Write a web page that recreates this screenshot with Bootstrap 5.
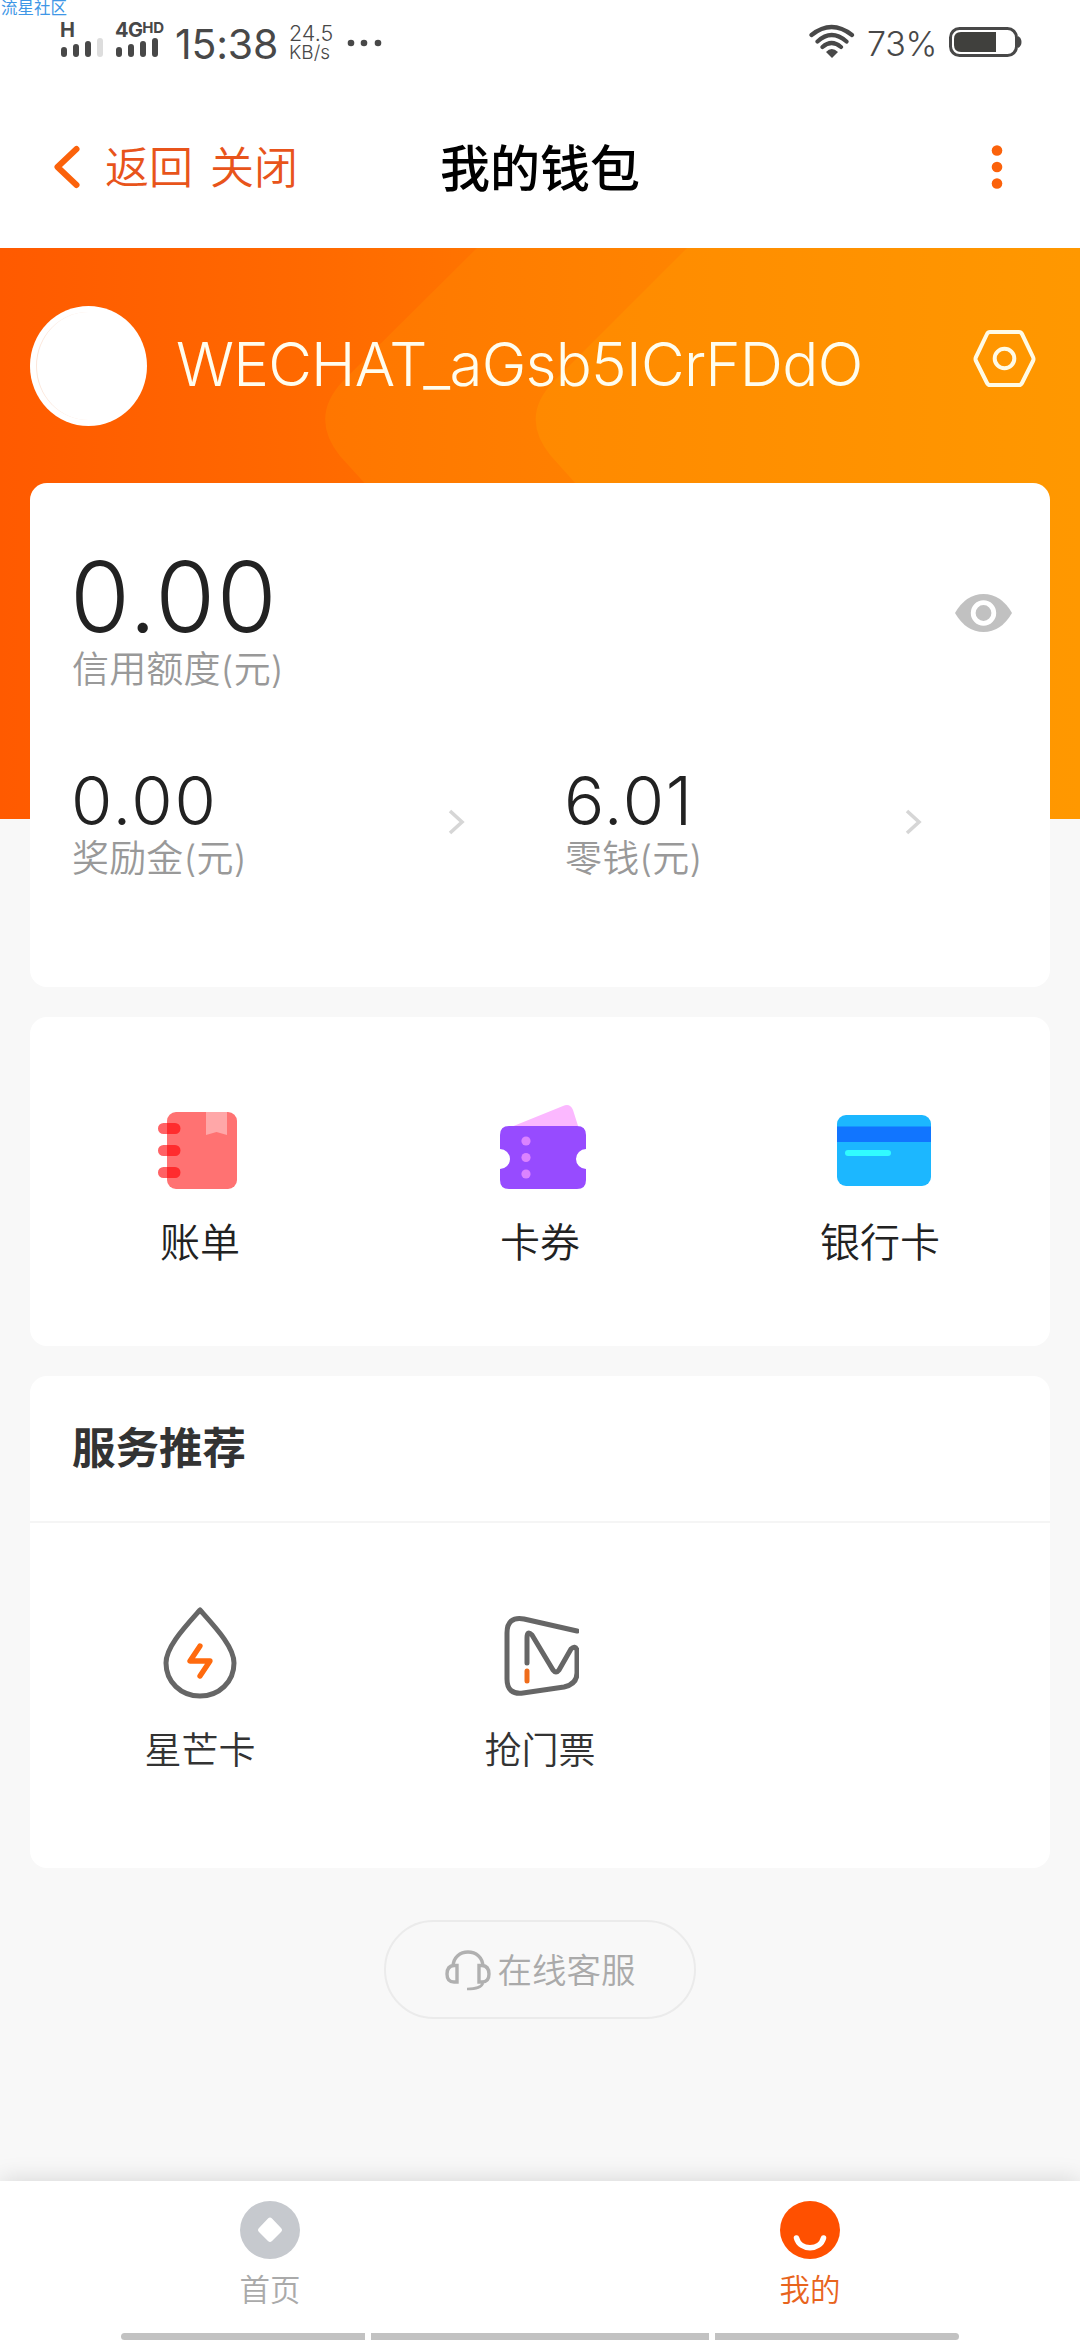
<!DOCTYPE html>
<html lang="zh-CN">
<head>
<meta charset="utf-8">
<meta name="viewport" content="width=device-width, initial-scale=1">
<title>我的钱包</title>
<link rel="stylesheet" href="https://cdn.jsdelivr.net/npm/bootstrap@5.3.0/dist/css/bootstrap.min.css">
<style>
body{width:1080px;height:2340px;overflow:hidden;background:#f8f8f8;color:#222;font-family:Inter,"Noto Sans CJK SC",sans-serif;font-weight:350;line-height:1}
svg{display:block;flex:none}
.watermark{left:1px;top:-1px;font-size:16.5px;color:#3f97e6;line-height:18px;z-index:5;font-weight:400}
.statusbar{height:84px;color:#484848;padding:0 58px 0 60px}
.sig{padding-top:22px}
.sig-label{font-size:20px;line-height:16px;font-weight:700;letter-spacing:-.6px}
.sig-label sup{font-size:15px;top:-4px;line-height:0;vertical-align:baseline;letter-spacing:-.3px}
.clock{font-size:41px;font-weight:400;letter-spacing:-.2px;padding-top:24px;width:114px}
.netspeed{font-size:21.5px;line-height:20px;font-weight:350;padding-top:23px;width:57px}
.netspeed div+div{font-size:19px}
.battery-pct{font-size:34px;font-weight:350;letter-spacing:-.3px;padding-top:27px;width:82px}
.titlebar{height:164px;padding:2px 75px 0 51px}
.orange-link{color:#e8541b;font-size:44px;line-height:60px}
.page-title{font-size:50px;font-weight:500;color:#000;line-height:60px;top:55px}
.hero{height:571px}
.hero-bg{z-index:0}
.hero-user{height:235px;padding:0 44px 0 30px;z-index:1}
.avatar{width:117px;height:120px;background:#fff;border-radius:50%}
.avatar i{width:105px;height:108px;border-radius:50%;border-left:1px solid #fbe6da}
.nickname{font-size:60px;font-weight:300;color:#fffdee;line-height:70px;letter-spacing:-.75px;margin:-3px 0 0 29px}
.panel{background:#fff;border-radius:17px;margin:0 30px;position:relative;z-index:1}
.wallet{height:504px;padding:77px 37px 0 42px;margin-top:-336px}
.amount-lg{font-size:97px;line-height:73px;font-weight:300;letter-spacing:1.5px;margin-left:-2px}
.amount-sm{font-size:67px;line-height:50px;font-weight:300;letter-spacing:1.7px;margin-left:-1px}
.caption{font-size:37px;line-height:44px;color:#999;letter-spacing:.15px}
.entries{height:329px;margin-top:30px;padding-top:83px}
.entry{width:340px}
.entry span{font-size:40px;line-height:48px}
.service{height:492px;margin-top:30px}
.service h2{font-size:43.5px;font-weight:700;color:#333;height:147px;padding:0 42px;line-height:145px;border-bottom:2px solid #f5f5f5;margin:0}
.service .entry span{font-size:37px;line-height:44px;color:#333}
.help-btn{width:312px;height:99px;margin:52px auto 0;border:2px solid #ebebeb;border-radius:50px;color:#aaa;font-size:34.5px;font-weight:350;padding:2px 0 0}
.tabs{height:159px;background:#fff;margin-top:162px;box-shadow:0 -2px 22px rgba(0,0,0,.13);position:relative}
.tab-item{font-size:30.5px;line-height:36px;color:#aaa;padding-top:20px}
.tab-item.active{color:#e8641c}
.gesture{height:7px;gap:6px;left:121px;bottom:0}
.gesture i{background:#c2c2c2;height:7px}
</style>
</head>
<body class="position-relative">
<div class="watermark position-absolute">流星社区</div>
<header class="bg-white">
 <div class="statusbar d-flex align-items-start justify-content-between">
  <div class="d-flex">
   <div class="sig" style="width:55px"><div class="sig-label">H</div>
    <svg width="44" height="20"><g stroke="#484848" stroke-width="6" stroke-linecap="round"><path d="M4 12V16M16 9V16M28 6V16"/><path stroke="#ddd" d="M40 3V16"/></g></svg></div>
   <div class="sig" style="width:60px"><div class="sig-label text-nowrap">4G<sup>HD</sup></div>
    <svg width="46" height="20"><path d="M4 12V16M16 9V16M28 6V16M40 3V16" stroke="#484848" stroke-width="6" stroke-linecap="round"/></svg></div>
   <div class="clock">15:38</div>
   <div class="netspeed"><div>24.5</div><div>KB/s</div></div>
   <svg width="40" height="86"><g fill="#484848"><circle cx="5" cy="43" r="3.300"/><circle cx="18" cy="43" r="3.300"/><circle cx="32" cy="43" r="3.300"/></g></svg>
  </div>
  <div class="d-flex align-items-start">
   <svg width="46" height="60" style="margin-right:12px"><g fill="none" stroke="#484848" stroke-width="4.200" stroke-linecap="round"><path d="M2.500 35Q22.500 19 43 35M8.500 41.500Q22.500 28.500 37.500 41.500M13.500 47Q22.500 39 32 47"/></g><path d="M17 52Q22.500 46 29 52L23 58Z" fill="#484848"/></svg>
   <div class="battery-pct">73%</div>
   <svg width="73" height="60"><rect x="1.500" y="28.500" width="66" height="27" rx="9" fill="none" stroke="#484848" stroke-width="3"/><path d="M12 32H47V52H12Q5 52 5 45V39Q5 32 12 32Z" fill="#40403d"/><path d="M69 36Q72.500 38 72.500 42T69 48Z" fill="#484848"/></svg>
  </div>
 </div>
 <nav class="titlebar d-flex align-items-center justify-content-between position-relative">
  <div class="d-flex align-items-center orange-link">
   <svg width="30" height="46"><path d="M25.500 5L6.500 23L25.500 41" fill="none" stroke="#fb620b" stroke-width="6" stroke-linecap="round" stroke-linejoin="round"/></svg>
   <span style="margin:2px 0 0 24px">返回</span><span style="margin:2px 0 0 17px">关闭</span>
  </div>
  <div class="page-title position-absolute start-50 translate-middle-x">我的钱包</div>
  <svg width="16" height="46"><g fill="#fb620b"><circle cx="8" cy="6.500" r="5.300"/><circle cx="8" cy="23" r="5.300"/><circle cx="8" cy="39.500" r="5.300"/></g></svg>
 </nav>
</header>
<main>
 <section class="hero position-relative">
  <svg class="hero-bg position-absolute top-0 start-0" width="1080" height="571">
   <defs><linearGradient id="heroGrad"><stop offset="0" stop-color="#ff5a00"/><stop offset=".3" stop-color="#ff6a00"/><stop offset=".45" stop-color="#ff7400"/><stop offset="1" stop-color="#ff9800"/></linearGradient>
   <linearGradient id="bandA" gradientUnits="userSpaceOnUse" x1="325" x2="700" y1="0" y2="0"><stop offset="0" stop-color="#ff7600"/><stop offset="1" stop-color="#ff8500"/></linearGradient>
   <linearGradient id="bandB" gradientUnits="userSpaceOnUse" x1="535" x2="1080" y1="0" y2="0"><stop offset="0" stop-color="#ff8900"/><stop offset="1" stop-color="#ff9800"/></linearGradient></defs>
   <rect width="1080" height="571" fill="url(#heroGrad)"/>
   <path d="M477 0L343 133Q309 169 340 208L410 285V571H1080V0Z" fill="url(#bandA)"/>
   <path d="M687 0L554 133Q519 169 551 208L620 285V571H1080V0Z" fill="url(#bandB)"/>
  </svg>
  <div class="hero-user d-flex align-items-center position-relative">
   <div class="avatar d-flex align-items-center justify-content-center"><i></i></div>
   <div class="nickname text-nowrap flex-grow-1">WECHAT_aGsb5ICrFDdO</div>
   <svg width="63" height="60" style="margin-top:-15px"><g fill="none" stroke="#fffbe6" stroke-width="4" stroke-linejoin="round"><path d="M17 4H46Q48 4 49 6L60 29Q61 31 60 33L49 55Q48 57 46 57H17Q15 57 14 55L3 33Q2 31 3 29L14 6Q15 4 17 4Z"/><circle cx="31.500" cy="30.500" r="9.800"/></g></svg>
  </div>
 </section>
 <section class="panel wallet">
  <div class="d-flex justify-content-between">
   <div><div class="amount-lg">0.00</div><div class="caption" style="margin-top:15px">信用额度(元)</div></div>
   <svg width="59" height="40" style="margin-top:33px"><path d="M1 20Q12 1 29.500 1T58 20Q47 39 29.500 39T1 20Z" fill="#c1c1c1"/><circle cx="29.500" cy="20" r="10.300" fill="#c1c1c1" stroke="#fff" stroke-width="4.800"/></svg>
  </div>
  <div class="d-flex" style="margin-top:84px">
   <div style="width:376px"><div class="amount-sm">0.00</div><div class="caption" style="margin-top:11px">奖励金(元)</div></div>
   <svg width="17" height="26" style="margin:33px 100px 0 0"><path d="M2 2L14 13L2 24" fill="none" stroke="#d6d6d6" stroke-width="3.600"/></svg>
   <div style="width:340px"><div class="amount-sm">6.01</div><div class="caption" style="margin-top:11px">零钱(元)</div></div>
   <svg width="17" height="26" style="margin-top:33px"><path d="M2 2L14 13L2 24" fill="none" stroke="#d6d6d6" stroke-width="3.600"/></svg>
  </div>
 </section>
 <section class="panel entries d-flex">
  <div class="entry d-flex flex-column align-items-center">
   <svg width="86" height="90"><rect x="10" y="12" width="70" height="77" rx="9" fill="#ff7272"/><path d="M49 12H70V35L59.500 32L49 35Z" fill="#ffa7a8"/><g fill="#ff6265"><rect x="1" y="23" width="22" height="11" rx="5.500"/><rect x="1" y="45" width="22" height="11" rx="5.500"/><rect x="1" y="67" width="22" height="11" rx="5.500"/></g><path d="M10 23H18A5.500 5.500 0 0 1 18 34H10ZM10 45H18A5.500 5.500 0 0 1 18 56H10ZM10 67H18A5.500 5.500 0 0 1 18 78H10Z" fill="#ff2c2e"/></svg>
   <span style="margin-top:29px">账单</span>
  </div>
  <div class="entry d-flex flex-column align-items-center">
   <svg width="86" height="90" style="margin-left:6px"><path d="M6 29L63 6Q70 3 73 10L79 29Z" fill="#fbb8ff"/><path d="M9 26H77Q86 26 86 35V49A10 10 0 0 0 86 69V80Q86 89 77 89H9Q0 89 0 80V69A10 10 0 0 0 0 49V35Q0 26 9 26Z" fill="#974bff"/><g fill="#db83ff"><circle cx="26" cy="41" r="4.600"/><circle cx="26" cy="57.500" r="4.600"/><circle cx="26" cy="74" r="4.600"/></g></svg>
   <span style="margin-top:29px">卡券</span>
  </div>
  <div class="entry d-flex flex-column align-items-center">
   <svg width="94" height="90" style="margin-left:7px"><rect y="15" width="94" height="71" rx="9" fill="#1cb7ff"/><path d="M0 26.500H94V42H0Z" fill="#1175ff"/><rect x="8" y="50" width="46" height="6" rx="3" fill="#31fbff"/></svg>
   <span style="margin-top:29px">银行卡</span>
  </div>
 </section>
 <section class="panel service">
  <h2>服务推荐</h2>
  <div class="d-flex" style="padding-top:82px">
   <div class="entry d-flex flex-column align-items-center">
    <svg width="76" height="94"><path d="M38 5C22 23 4 42 4 58C4 77 19 91 38 91S72 77 72 58C72 42 54 23 38 5Z" fill="none" stroke="#666" stroke-width="5" stroke-linejoin="round"/><path d="M38 41L28 56H48L38 71" fill="none" stroke="#ff6a0e" stroke-width="5.300" stroke-linecap="round" stroke-linejoin="round"/></svg>
    <span style="margin-top:30px">星芒卡</span>
   </div>
   <div class="entry d-flex flex-column align-items-center">
    <svg width="78" height="94"><g fill="none" stroke="#666" stroke-width="5" stroke-linecap="round" stroke-linejoin="round"><path d="M76 26L23 14Q6 11 6 28V74Q6 90 22 88L63 82Q76 79 76 68V45Q74 40 70 44L58 65Q55 69 52 65L31 30Q26 25 26 33V58"/></g><path d="M26 66V76" stroke="#ef6c1a" stroke-width="5" stroke-linecap="round"/></svg>
    <span style="margin-top:30px">抢门票</span>
   </div>
  </div>
 </section>
 <button class="btn help-btn d-flex align-items-center justify-content-center">
  <svg width="46" height="42" style="margin-right:7px"><g fill="none" stroke="#b0b0b0" stroke-width="3.400"><path d="M8 17C8-3 38-3 38 17"/><path d="M12 15.500H9Q2 16 2 24T9 32H12Z"/><path d="M34 15.500H37Q44 16 44 24T37 32H34Z"/><path d="M38 33Q36 39 22 39" stroke-width="2.600"/></g></svg><span>在线客服</span>
 </button>
</main>
<footer class="tabs d-flex">
 <div class="tab-item d-flex flex-column align-items-center w-50">
  <svg width="60" height="58"><ellipse cx="30" cy="29" rx="30" ry="29" fill="#c6c9ce"/><path d="M28 17.500Q30 15.500 32 17.500L41 27Q43 29 41 31L32 40Q30 42 28 40L19 31Q17 29 19 27Z" fill="#fff"/></svg>
  <span style="margin-top:13px">首页</span>
 </div>
 <div class="tab-item active d-flex flex-column align-items-center w-50">
  <svg width="60" height="58"><ellipse cx="30" cy="29" rx="30" ry="29" fill="#ff5000"/><path d="M16.500 37C20 50 40 50 43.500 37" fill="none" stroke="#fff" stroke-width="5.500" stroke-linecap="round"/></svg>
  <span style="margin-top:13px">我的</span>
 </div>
 <div class="gesture d-flex position-absolute"><i style="width:244px;border-radius:4px 0 0 4px"></i><i style="width:338px"></i><i style="width:244px;border-radius:0 4px 4px 0"></i></div>
</footer>
<script src="https://cdn.jsdelivr.net/npm/bootstrap@5.3.0/dist/js/bootstrap.bundle.min.js"></script>
</body>
</html>
